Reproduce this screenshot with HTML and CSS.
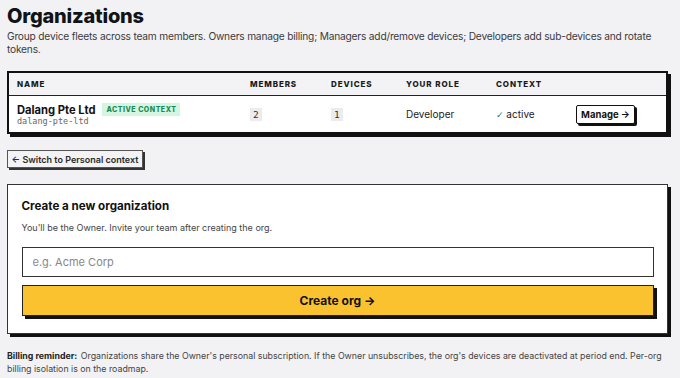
FILE: index.html
```html
<!DOCTYPE html>
<html lang="en">
<head>
    <meta charset="UTF-8">
    <meta name="viewport" content="width=device-width, initial-scale=1.0">
    <title>Organizations</title>
    <link rel="stylesheet" href="styles.css">
</head>
<body>
    <main class="page">
        <h1 class="page-title">Organizations</h1>
        <p class="page-desc">Group device fleets across team members. Owners manage billing; Managers add/remove devices; Developers add sub-devices and rotate tokens.</p>

        <div class="org-table-wrap">
            <table class="org-table">
                <colgroup>
                    <col class="col-name">
                    <col class="col-members">
                    <col class="col-devices">
                    <col class="col-role">
                    <col class="col-context">
                    <col>
                </colgroup>
                <thead>
                    <tr>
                        <th>Name</th>
                        <th>Members</th>
                        <th>Devices</th>
                        <th>Your role</th>
                        <th>Context</th>
                        <th></th>
                    </tr>
                </thead>
                <tbody>
                    <tr>
                        <td>
                            <div class="org-name-line">
                                <span class="org-name">Dalang Pte Ltd</span>
                                <span class="badge-active">Active context</span>
                            </div>
                            <div class="org-slug">dalang-pte-ltd</div>
                        </td>
                        <td><span class="count">2</span></td>
                        <td><span class="count">1</span></td>
                        <td class="role">Developer</td>
                        <td class="ctx-active"><span class="check">✓</span> active</td>
                        <td><button class="btn-manage">Manage →</button></td>
                    </tr>
                </tbody>
            </table>
        </div>

        <button class="btn-switch">← Switch to Personal context</button>

        <section class="create-card">
            <h2 class="create-title">Create a new organization</h2>
            <p class="create-sub">You'll be the Owner. Invite your team after creating the org.</p>
            <input class="create-input" type="text" placeholder="e.g. Acme Corp">
            <button class="btn-create">Create org →</button>
        </section>

        <p class="billing-note"><strong class="note-label">Billing reminder:</strong> Organizations share the Owner's personal subscription. If the Owner unsubscribes, the org's devices are deactivated at period end. Per-org billing isolation is on the roadmap.</p>
    </main>
</body>
</html>
```

FILE: styles.css
```css
body {
    margin: 0;
    background: #f2f2f4;
    font-family: 'Inter', 'Liberation Sans', sans-serif;
    color: #111;
}

.page {
    padding: 3px 7px 0 7px;
    width: 661px;
}

.page-title {
    margin: 0;
    font-size: 20px;
    line-height: 26px;
    font-weight: 800;
    letter-spacing: -0.2px;
    color: #111318;
}

.page-desc {
    margin: 1px 0 0 0;
    font-size: 10.2px;
    line-height: 13px;
    letter-spacing: -0.2px;
    color: #3a3a3e;
}

.org-table-wrap {
    margin-top: 15px;
    border: 2px solid #111;
    box-shadow: 3px 3px 0 #111;
    background: #fff;
}

.org-table {
    width: 100%;
    border-collapse: collapse;
    table-layout: fixed;
}

.col-name { width: 233px; }
.col-members { width: 81px; }
.col-devices { width: 75px; }
.col-role { width: 90px; }
.col-context { width: 80px; }

.org-table th {
    height: 22px;
    padding: 0 8px;
    text-align: left;
    font-size: 8px;
    font-weight: 800;
    letter-spacing: 0.9px;
    text-transform: uppercase;
    color: #1a1a1a;
    background: #f3f3f5;
    border-bottom: 1.5px solid #222;
}

.org-table td {
    height: 36px;
    padding: 0 8px;
    font-size: 10px;
    color: #222;
}

.org-name-line {
    display: flex;
    align-items: center;
    gap: 7px;
    height: 14px;
}

.org-name {
    font-size: 11.2px;
    font-weight: 700;
    color: #111;
}

.badge-active {
    padding: 2px 4px;
    background: #d3f5e2;
    color: #1b8a50;
    font-size: 7px;
    font-weight: 800;
    letter-spacing: 0.5px;
    text-transform: uppercase;
}

.org-slug {
    font-family: 'DejaVu Sans Mono', 'Liberation Mono', monospace;
    font-size: 8.5px;
    color: #666;
    line-height: 9px;
}

.count {
    padding: 1px 3px;
    background: #ececee;
    font-family: 'DejaVu Sans Mono', 'Liberation Mono', monospace;
    font-size: 9.5px;
    color: #333;
}

.role {
    color: #333;
}

.ctx-active {
    color: #2f7a52;
}

.check {
    font-family: 'DejaVu Sans', sans-serif;
    font-size: 9px;
    color: #2f7a52;
}

.btn-manage {
    width: 59px;
    height: 19px;
    padding: 0;
    border: 1.5px solid #111;
    border-radius: 2px;
    background: #fff;
    box-shadow: 2px 2px 0 #111;
    font-family: inherit;
    font-size: 9.5px;
    font-weight: 700;
    color: #111;
}

.btn-switch {
    display: block;
    margin-top: 16px;
    width: 136px;
    height: 18px;
    padding: 0;
    border: 1px solid #555;
    background: #f3f3f5;
    box-shadow: 2px 2px 0 #333;
    font-family: inherit;
    font-size: 9px;
    font-weight: 600;
    color: #2a2a2a;
}

.create-card {
    margin-top: 16px;
    padding: 13px 13.5px 17px 13.5px;
    border: 1.5px solid #333;
    background: #fff;
    box-shadow: 3px 3px 0 #111;
}

.create-title {
    margin: 0;
    font-size: 11.6px;
    line-height: 16px;
    font-weight: 700;
    color: #111;
}

.create-sub {
    margin: 8px 0 0 0;
    font-size: 9px;
    line-height: 12px;
    color: #444;
}

.create-input {
    display: block;
    box-sizing: border-box;
    width: 100%;
    height: 30px;
    margin-top: 13px;
    padding: 0 10px;
    border: 1.5px solid #333;
    font-family: inherit;
    font-size: 11px;
    color: #111;
    outline: none;
}

.create-input::placeholder {
    color: #888;
}

.btn-create {
    display: block;
    width: 100%;
    height: 31px;
    margin-top: 8px;
    border: 1.5px solid #222;
    background: #fbc22f;
    box-shadow: 3px 3px 0 #111;
    font-family: inherit;
    font-size: 12px;
    font-weight: 700;
    color: #111;
}

.billing-note {
    margin: 15px 0 0 0;
    font-size: 8.8px;
    line-height: 13px;
    color: #444;
}

.note-label {
    color: #222;
    margin-right: 1px;
}
```
